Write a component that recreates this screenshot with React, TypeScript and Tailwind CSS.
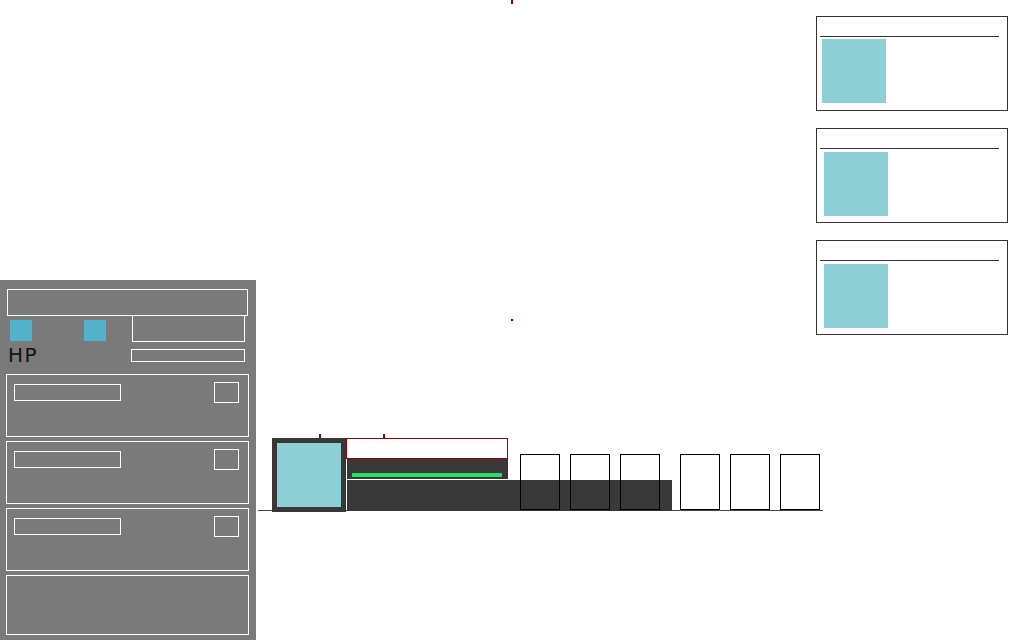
import React from 'react';

// HUD: panneau joueur en bas à gauche, fiches à droite, barre d'actions en bas

const SlotCard = ({ empty = false }: { empty?: boolean }) => {
  if (empty) {
    return <div className="w-[243px] h-[60px] border border-white"></div>;
  }
  return (
    <div className="w-[243px] h-[63px] border border-white flex justify-between items-start">
      <div className="ml-[7px] mt-[9px] w-[107px] h-[17px] border border-white"></div>
      <div className="mr-[9px] mt-[7px] w-[25px] h-[21px] border border-white"></div>
    </div>
  );
};

const InfoCard = ({ inset = false }: { inset?: boolean }) => (
  <div className="w-[192px] h-[95px] border border-[#333] bg-white">
    <div className="h-[19px]"></div>
    <div className="ml-[3px] w-[179px] border-t border-[#333]"></div>
    <div
      className={
        inset
          ? 'ml-[7px] mt-[3px] w-[64px] h-[64px] bg-[#8cd0d6]'
          : 'ml-[5px] mt-[2px] w-[64px] h-[64px] bg-[#8cd0d6]'
      }
    ></div>
  </div>
);

const PlayerPanel = () => (
  <div className="h-[360px] bg-[#7a7a7a] pt-[9px] flex flex-col">
    <div className="ml-[7px] w-[241px] h-[27px] border border-white"></div>
    <div className="flex">
      <div className="w-[131px] pl-[10px] pt-[4px]">
        <div className="flex gap-[52px]">
          <div className="w-[22px] h-[21px] bg-[#52b4ca]"></div>
          <div className="w-[22px] h-[21px] bg-[#52b4ca]"></div>
        </div>
        <div
          className="mt-[4px] -ml-[2px] text-[20px] leading-none tracking-[1.5px] text-[#111]"
          style={{ fontFamily: '"DejaVu Sans", sans-serif' }}
        >
          HP
        </div>
      </div>
      <div>
        <div className="-mt-[1px] ml-[1px] w-[113px] h-[27px] border border-white"></div>
        <div className="mt-[7px] w-[114px] h-[13px] border border-white"></div>
      </div>
    </div>
    <div className="mt-[9px] ml-[6px] flex flex-col gap-[4px]">
      <SlotCard />
      <SlotCard />
      <SlotCard />
      <SlotCard empty />
    </div>
  </div>
);

const ActionBar = () => (
  <div className="relative ml-[2px] mt-[99px] w-[565px] h-[78px] flex items-start">
    <div className="absolute left-0 right-0 bottom-[1px] h-px bg-[#444]"></div>
    <div className="absolute top-0 left-[61px] w-[2px] h-[4px] bg-[#a00000]"></div>
    <div className="absolute top-0 left-[125px] w-[2px] h-[4px] bg-[#a00000]"></div>

    <div className="relative z-10 ml-[14px] mt-[4px] w-[74px] h-[74px] bg-[#383838] p-[5px]">
      <div className="w-[64px] h-[64px] bg-[#8cd0d6]"></div>
    </div>

    <div className="relative mt-[4px] flex items-start">
      <div className="absolute left-[1px] top-[42px] w-[325px] h-[31px] bg-[#383838]"></div>
      <div className="relative z-10 w-[162px]">
        <div className="h-[21px] border border-[#a00000] bg-white"></div>
        <div className="ml-[1px] h-[20px] bg-[#383838] pt-[14px] pl-[5px]">
          <div className="w-[150px] h-[4px] bg-[#2ddc64]"></div>
        </div>
      </div>
      <div className="relative z-10 ml-[12px] mt-[16px] flex">
        <div className="flex gap-[10px]">
          <div className="w-[40px] h-[56px] border border-black"></div>
          <div className="w-[40px] h-[56px] border border-black"></div>
          <div className="w-[40px] h-[56px] border border-black"></div>
        </div>
        <div className="ml-[20px] flex gap-[10px]">
          <div className="w-[40px] h-[56px] border border-black"></div>
          <div className="w-[40px] h-[56px] border border-black"></div>
          <div className="w-[40px] h-[56px] border border-black"></div>
        </div>
      </div>
    </div>
  </div>
);

export default function App() {
  return (
    <div className="relative w-[1024px] h-[640px] bg-white overflow-hidden flex">
      {/* repères du centre */}
      <div className="absolute top-0 left-[511px] w-[2px] h-[4px] bg-[#a00000]"></div>
      <div className="absolute top-[319px] left-[511px] w-[2px] h-[2px] bg-[#a00000]"></div>

      <div className="w-[256px] flex flex-col justify-end">
        <PlayerPanel />
      </div>

      <div className="flex-1 flex flex-col">
        <div className="self-end mr-[16px] mt-[16px] flex flex-col gap-[17px]">
          <InfoCard />
          <InfoCard inset />
          <InfoCard inset />
        </div>
        <ActionBar />
      </div>
    </div>
  );
}
